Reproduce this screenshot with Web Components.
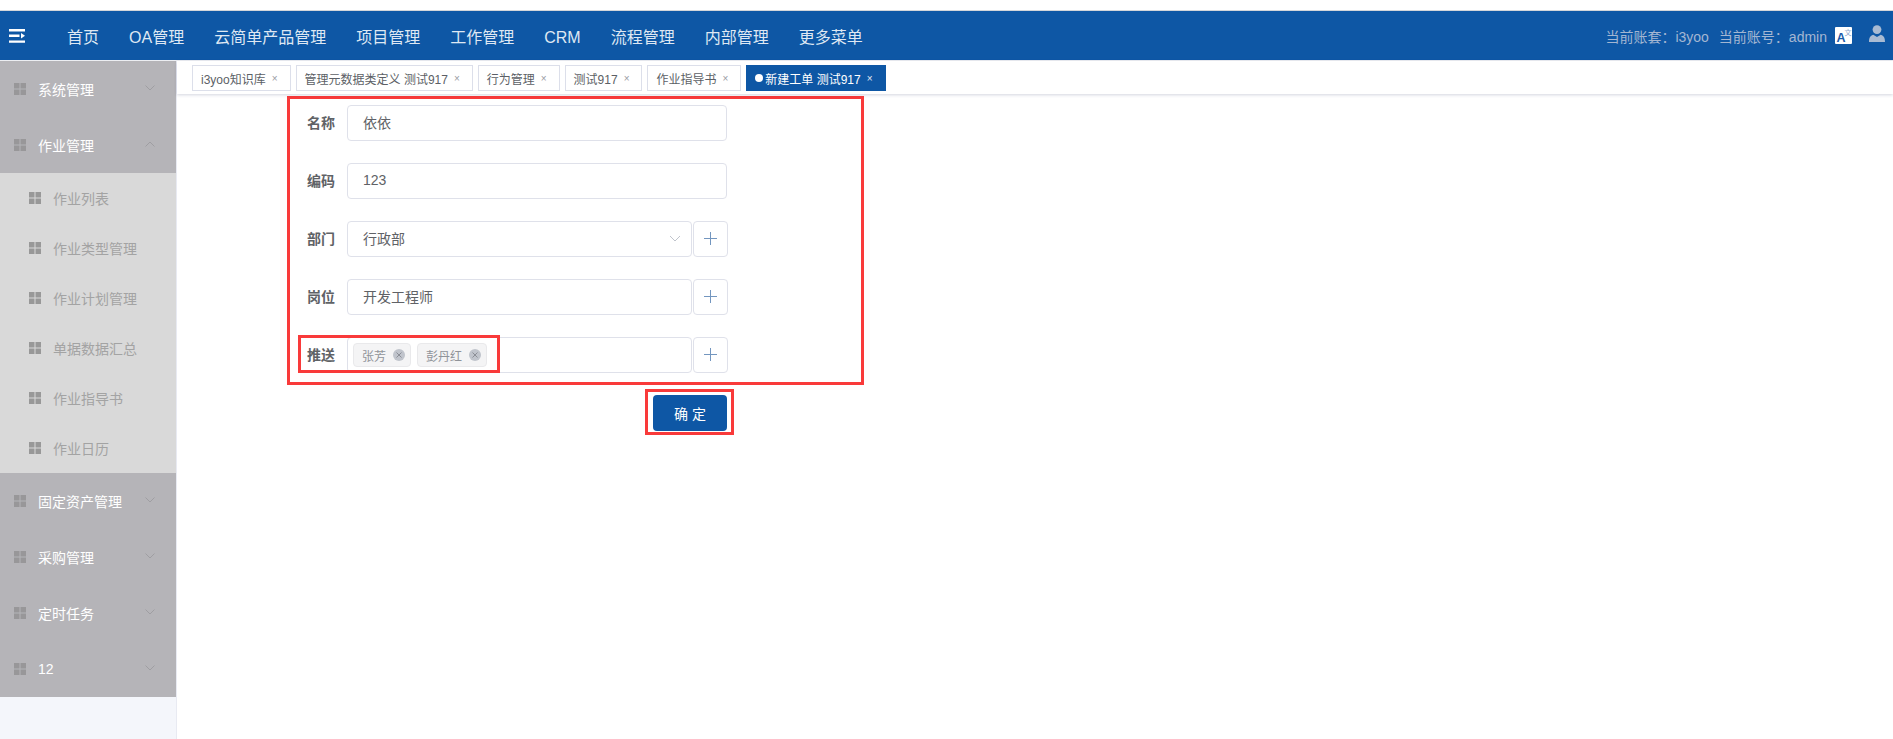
<!DOCTYPE html>
<html lang="zh">
<head>
<meta charset="utf-8">
<title>新建工单</title>
<style>
html, body { margin: 0; height: 100%; overflow: hidden; background: #fff; }
body { font-family: "Liberation Sans", "Noto Sans CJK SC", sans-serif; font-size: 14px; color: #606266; }
</style>
</head>
<body>
<app-shell>
	<top-bar slot="top"></top-bar>
	<side-menu slot="side">
		<side-group label="系统管理"></side-group>
		<side-group label="作业管理" open>
			<side-item>作业列表</side-item>
			<side-item>作业类型管理</side-item>
			<side-item>作业计划管理</side-item>
			<side-item>单据数据汇总</side-item>
			<side-item>作业指导书</side-item>
			<side-item>作业日历</side-item>
		</side-group>
		<side-group label="固定资产管理"></side-group>
		<side-group label="采购管理"></side-group>
		<side-group label="定时任务"></side-group>
		<side-group label="12"></side-group>
	</side-menu>
	<tab-bar slot="tabs">
		<tab-item>i3yoo知识库</tab-item>
		<tab-item>管理元数据类定义 测试917</tab-item>
		<tab-item>行为管理</tab-item>
		<tab-item>测试917</tab-item>
		<tab-item>作业指导书</tab-item>
		<tab-item active>新建工单 测试917</tab-item>
	</tab-bar>
	<order-form></order-form>
</app-shell>

<script>
const gridIcon = `<svg width="12" height="12" viewBox="0 0 12 12"><path fill="currentColor" d="M0 0h5.5v5.5H0zM6.5 0H12v5.5H6.5zM0 6.5h5.5V12H0zM6.5 6.5H12V12H6.5z"/></svg>`;

class AppShell extends HTMLElement {
	constructor() {
		super();
		this.attachShadow({mode: 'open'}).innerHTML = `
<style>
:host { display: flex; flex-direction: column; height: 739px; padding-top: 10px; box-sizing: border-box; }
#body { flex: 1; display: flex; min-height: 0; }
#side { width: 177px; flex: none; box-sizing: border-box; background: #f4f6fb; border-right: 1px solid #e8eaf2; }
#main { flex: 1; min-width: 0; }
</style>
<slot name="top"></slot>
<div id="body">
	<div id="side"><slot name="side"></slot></div>
	<div id="main"><slot name="tabs"></slot><slot></slot></div>
</div>`;
	}
}
customElements.define('app-shell', AppShell);

class TopBar extends HTMLElement {
	constructor() {
		super();
		const nav = ['首页', 'OA管理', '云简单产品管理', '项目管理', '工作管理', 'CRM', '流程管理', '内部管理', '更多菜单'];
		this.attachShadow({mode: 'open'}).innerHTML = `
<style>
:host { display: flex; align-items: center; height: 51px; box-sizing: border-box; background: #0e57a5; border-top: 1px solid #d4d6da; border-bottom: 1px solid #eceef2; }
#menu { display: block; margin-left: 9px; flex: none; }
nav { display: flex; align-items: baseline; gap: 30px; margin-left: 42px; font-size: 16px; color: #dfe8f3; white-space: nowrap; }
#right { margin-left: auto; display: flex; align-items: center; font-size: 14px; color: #a3b6d2; white-space: nowrap; }
#right span + span { margin-left: 10px; }
#lang { margin-left: 8px; display: block; }
#user { margin-left: 17px; margin-right: 8px; display: block; position: relative; top: -2px; }
</style>
<svg id="menu" width="16" height="14" viewBox="0 0 16 14">
	<path fill="#fff" d="M0 0h16v2.4H0zM0 5.6h10.5v2.4H0zM0 11.4h16v2.4H0z"/>
	<path fill="#fff" d="M12 4l4 2.8-4 2.8z"/>
</svg>
<nav>${nav.map(n => `<span>${n}</span>`).join('')}</nav>
<div id="right">
	<span>当前账套：i3yoo</span>
	<span>当前账号：admin</span>
	<svg id="lang" width="17" height="17" viewBox="0 0 17 17">
		<rect width="17" height="17" rx="1" fill="#fff"/>
		<text x="1.500" y="14.500" font-family="Liberation Sans, sans-serif" font-size="12.500" font-weight="700" fill="#1a5aa8">A</text>
		<text x="9.500" y="8" font-family="Noto Sans CJK SC, sans-serif" font-size="7" fill="#8fa8cc">文</text>
	</svg>
	<svg id="user" width="16" height="17" viewBox="0 0 16 17">
		<circle cx="8" cy="4.6" r="4.400" fill="#a9bbd3"/>
		<path fill="#a9bbd3" d="M0 17c0-4 1-6.400 4.200-7.300L8 12l3.800-2.300C15 10.600 16 13 16 17z"/>
	</svg>
</div>`;
	}
}
customElements.define('top-bar', TopBar);

class SideMenu extends HTMLElement {
	constructor() {
		super();
		this.attachShadow({mode: 'open'}).innerHTML = `
<style>:host { display: block; }</style>
<slot></slot>`;
	}
}
customElements.define('side-menu', SideMenu);

class SideGroup extends HTMLElement {
	constructor() {
		super();
		this.attachShadow({mode: 'open'});
	}

	connectedCallback() {
		const open = this.hasAttribute('open');
		const chevron = open ? 'M.5 5.500L5 1l4.500 4.500' : 'M.5 .5L5 5l4.500-4.500';
		this.shadowRoot.innerHTML = `
<style>
:host { display: block; }
#head { display: flex; align-items: center; height: 56px; padding-left: 14px; background: #b5b4b8; color: #fff; font-size: 14px; position: relative; }
#icon { color: #989799; display: flex; margin-right: 12px; }
#arrow { position: absolute; left: 145px; top: 24px; }
#sub { background: #d9d9d9; }
</style>
<div id="head">
	<span id="icon">${gridIcon}</span>
	<span>${this.getAttribute('label')}</span>
	<svg id="arrow" width="10" height="6" viewBox="0 0 10 6"><path d="${chevron}" fill="none" stroke="#9f9ea2" stroke-width="1"/></svg>
</div>
${open ? '<div id="sub"><slot></slot></div>' : ''}`;
	}
}
customElements.define('side-group', SideGroup);

class SideItem extends HTMLElement {
	constructor() {
		super();
		this.attachShadow({mode: 'open'}).innerHTML = `
<style>
:host { display: flex; align-items: center; height: 50px; padding-left: 29px; color: #a3a3a3; font-size: 14px; }
#icon { color: #989898; display: flex; margin-right: 12px; }
</style>
<span id="icon">${gridIcon}</span><slot></slot>`;
	}
}
customElements.define('side-item', SideItem);

class TabBar extends HTMLElement {
	constructor() {
		super();
		this.attachShadow({mode: 'open'}).innerHTML = `
<style>
:host { display: flex; gap: 5px; height: 33px; box-sizing: border-box; padding: 4px 0 0 15px; background: #fff; box-shadow: 0 1px 3px rgba(60, 70, 110, .22); position: relative; }
</style>
<slot></slot>`;
	}
}
customElements.define('tab-bar', TabBar);

class TabItem extends HTMLElement {
	constructor() {
		super();
		const active = this.hasAttribute('active');
		this.attachShadow({mode: 'open'}).innerHTML = `
<style>
:host { display: flex; align-items: center; height: 26px; box-sizing: border-box; padding: 0 12px 0 8px; border: 1px solid #dcdfea; background: #fff; color: #5c5f66; font-size: 12px; white-space: nowrap; }
:host([active]) { background: #0e57a5; border-color: #0e57a5; color: #fff; }
#dot { width: 8px; height: 8px; border-radius: 50%; background: #fff; margin-right: 2px; }
#x { margin-left: 6px; font-size: 10px; color: #9a9ca3; }
:host([active]) #x { color: #e2e8f2; }
</style>
${active ? '<span id="dot"></span>' : ''}<slot></slot><span id="x">×</span>`;
	}
}
customElements.define('tab-item', TabItem);

class FormRow extends HTMLElement {
	constructor() {
		super();
		this.attachShadow({mode: 'open'}).innerHTML = `
<style>
:host { display: flex; align-items: center; height: 36px; position: relative; }
#label { width: 40px; flex: none; padding-bottom: 2px; font-size: 14px; font-weight: 700; color: #5f6266; }
#field { display: flex; flex: 1; min-width: 0; }
:host([mark])::after { content: ""; position: absolute; left: -9px; top: -2px; width: 196px; height: 32px; border: 3px solid #f93a3a; pointer-events: none; }
</style>
<span id="label">${this.getAttribute('label')}</span>
<div id="field"><slot></slot></div>`;
	}
}
customElements.define('form-row', FormRow);

class TextBox extends HTMLElement {
	constructor() {
		super();
		this.attachShadow({mode: 'open'}).innerHTML = `
<style>
:host { display: flex; align-items: center; flex: 1; min-width: 0; height: 36px; box-sizing: border-box; padding: 0 15px 2px; border: 1px solid #dfe1ea; border-radius: 4px; background: #fff; color: #606266; font-size: 14px; }
:host([wide]) { margin-right: 1px; }
:host([chips]) { padding: 0 5px; gap: 6px; }
svg { margin-left: auto; margin-right: -5px; }
</style>
<slot></slot>${this.hasAttribute('select') ? '<svg width="12" height="7" viewBox="0 0 12 7"><path d="M1 1l5 5 5-5" fill="none" stroke="#c0c4cc"/></svg>' : ''}`;
	}
}
customElements.define('text-box', TextBox);

class AddButton extends HTMLElement {
	constructor() {
		super();
		this.attachShadow({mode: 'open'}).innerHTML = `
<style>
:host { display: flex; align-items: center; justify-content: center; flex: none; width: 35px; height: 36px; box-sizing: border-box; margin-left: 1px; border: 1px solid #dfe1ea; border-radius: 4px; background: #fff; }
svg { display: block; margin-top: -1px; }
</style>
<svg width="13" height="13" viewBox="0 0 13 13"><path d="M6.500 0v13M0 6.500h13" stroke="#7396bf" stroke-width="1" fill="none"/></svg>`;
	}
}
customElements.define('add-button', AddButton);

class TagChip extends HTMLElement {
	constructor() {
		super();
		this.attachShadow({mode: 'open'}).innerHTML = `
<style>
:host { display: flex; align-items: center; height: 24px; box-sizing: border-box; padding: 0 5px 0 8px; border: 1px solid #e9e9eb; border-radius: 4px; background: #f4f4f5; color: #909399; font-size: 12px; white-space: nowrap; }
svg { margin-left: 7px; }
</style>
<slot></slot>
<svg width="12" height="12" viewBox="0 0 12 12"><circle cx="6" cy="6" r="6" fill="#c0c4cc"/><path d="M3.500 3.500l5 5M8.500 3.500l-5 5" stroke="#8b8e96" stroke-width="1"/></svg>`;
	}
}
customElements.define('tag-chip', TagChip);

class OrderForm extends HTMLElement {
	constructor() {
		super();
		this.attachShadow({mode: 'open'}).innerHTML = `
<style>
:host { display: block; padding: 2px 0 0 110px; }
#box { display: flex; flex-direction: column; gap: 22px; width: 577px; box-sizing: border-box; border: 3px solid #f93a3a; padding: 6px 133px 9px 17px; }
#submit { width: 89px; height: 46px; box-sizing: border-box; margin: 4px 0 0 358px; border: 3px solid #f93a3a; padding: 3px 4px 1px 5px; }
#ok { display: flex; align-items: center; justify-content: center; height: 36px; border-radius: 4px; background: #0e57a5; color: #fff; font-size: 14px; }
</style>
<div id="box">
	<form-row label="名称"><text-box wide>依依</text-box></form-row>
	<form-row label="编码"><text-box wide>123</text-box></form-row>
	<form-row label="部门"><text-box select>行政部</text-box><add-button></add-button></form-row>
	<form-row label="岗位"><text-box>开发工程师</text-box><add-button></add-button></form-row>
	<form-row label="推送" mark><text-box chips><tag-chip>张芳</tag-chip><tag-chip>彭丹红</tag-chip></text-box><add-button></add-button></form-row>
</div>
<div id="submit"><div id="ok">确 定</div></div>`;
	}
}
customElements.define('order-form', OrderForm);
</script>
</body>
</html>
